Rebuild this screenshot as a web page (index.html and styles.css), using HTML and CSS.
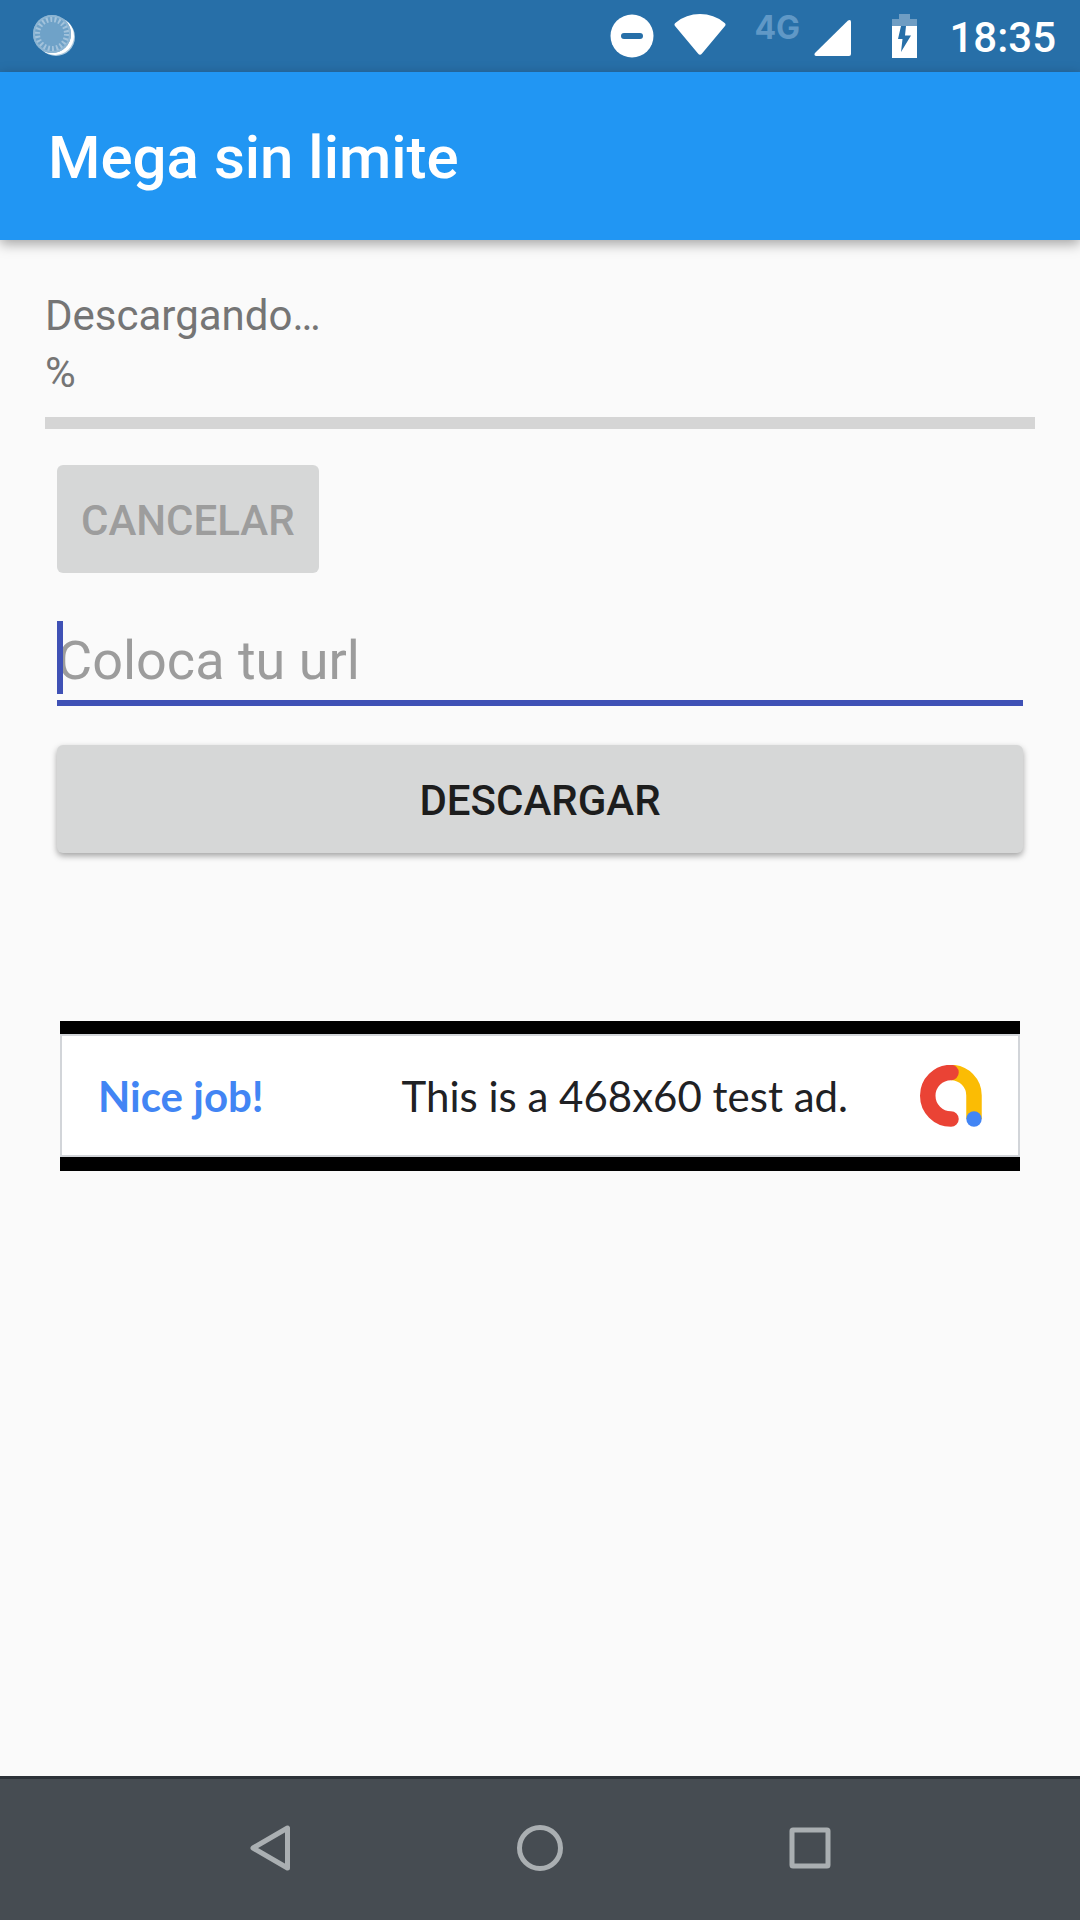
FILE: index.html
```html
<!DOCTYPE html>
<html lang="es">
<head>
<meta charset="utf-8">
<meta name="viewport" content="width=device-width, initial-scale=1">
<title>Mega sin limite</title>
<link rel="stylesheet" href="styles.css">
</head>
<body>
<div class="status-bar">
  <svg class="sync" width="48" height="48" viewBox="0 0 48 48" aria-hidden="true">
    <circle cx="25" cy="25" r="19" fill="#a9c8de"/>
    <circle cx="24" cy="24" r="19" fill="#fff"/>
    <circle cx="21" cy="22" r="19" fill="#6fa2c8"/>
    <circle cx="21" cy="22" r="15" fill="none" stroke="#a3c3dc" stroke-width="6" stroke-dasharray="2 2.280"/>
    <circle cx="21" cy="22" r="18" fill="none" stroke="#8db5d3" stroke-width="2"/>
  </svg>
  <div class="status-icons">
    <svg width="44" height="44" viewBox="0 0 44 44" aria-hidden="true">
      <circle cx="22" cy="22" r="21.500" fill="#fff"/>
      <rect x="11" y="19" width="22" height="6" rx="3" fill="#276fa8"/>
    </svg>
    <svg class="wifi" width="52" height="44" viewBox="0 0 52 44" aria-hidden="true">
      <path d="M2 8.500Q12 0 26 0T50 8.500Q52.500 10 51 12L28 39.500Q26 42 24 39.500L1 12Q-.5 10 2 8.500Z" fill="#fff"/>
    </svg>
    <span class="network">4G</span>
    <svg class="signal" width="38" height="38" viewBox="0 0 38 38" aria-hidden="true">
      <path d="M2 38Q-.5 37.500 1 35L34 2.500Q37 1 37 4V36Q37 38 35 38Z" fill="#fff"/>
    </svg>
    <svg class="battery" width="26" height="44" viewBox="0 0 26 44" aria-hidden="true">
      <path d="M7 0H18V5H25V12H0V5H7Z" fill="#6f9dc3"/>
      <path d="M0 12H25V44H0Z" fill="#fff"/>
      <path d="M9 12H14L13 21.500H19L9 38L10.500 25H6Z" fill="#276fa8"/>
    </svg>
    <time class="clock">18:35</time>
  </div>
</div>

<header class="app-bar">
  <h1 class="app-title">Mega sin limite</h1>
</header>

<main class="content">
  <p class="label" id="progress-label">Descargando…</p>
  <p class="label">%</p>
  <progress class="progress" value="0" max="100" aria-labelledby="progress-label"></progress>
  <form class="form">
    <button class="button cancel" type="button" disabled>CANCELAR</button>
    <div class="field">
      <input class="url" type="text" placeholder="Coloca tu url" aria-label="Coloca tu url">
      <span class="caret"></span>
    </div>
    <button class="button download" type="button">DESCARGAR</button>
  </form>
  <a class="ad" href="#">
    <span class="ad-body">
      <span class="ad-title">Nice job!</span>
      <span class="ad-text">This is a 468x60 test ad.</span>
      <svg width="62" height="62" viewBox="0 0 62 62" aria-hidden="true">
        <path d="M31 7.500A23 23 0 0 1 54 31V54" fill="none" stroke="#fbbc04" stroke-width="15.500"/>
        <path d="M31 7.500A23 23 0 0 0 31 54" fill="none" stroke="#ea4335" stroke-width="15.500" stroke-linecap="round"/>
        <circle cx="54" cy="54" r="7.700" fill="#4285f4"/>
      </svg>
    </span>
  </a>
</main>

<nav class="nav-bar">
  <button class="nav-button" type="button" aria-label="Atrás">
    <svg width="48" height="48" viewBox="0 0 48 48"><path d="M7 24L41.500 4V44Z"/></svg>
  </button>
  <button class="nav-button" type="button" aria-label="Inicio">
    <svg width="48" height="48" viewBox="0 0 48 48"><circle cx="24" cy="24" r="20.500"/></svg>
  </button>
  <button class="nav-button" type="button" aria-label="Recientes">
    <svg width="48" height="48" viewBox="0 0 48 48"><rect x="6" y="6" width="36" height="36" rx="1"/></svg>
  </button>
</nav>
</body>
</html>
```
FILE: styles.css
```css
* {
  box-sizing: border-box;
}

body {
  margin: 0;
  min-height: 100vh;
  display: flex;
  flex-direction: column;
  background: #fafafa;
  font-family: Roboto, sans-serif;
}

svg {
  display: block;
  flex: none;
}

.status-bar {
  height: 72px;
  padding: 0 24px 0 31px;
  display: flex;
  align-items: center;
  justify-content: space-between;
  background: #276fa8;
}

.status-icons {
  display: flex;
  align-items: center;
  color: #fff;
}

.wifi {
  margin-left: 20px;
}

.network {
  width: 46px;
  margin: 0 14px 16px 28px;
  font: 700 32px/32px Inter, sans-serif;
  color: #6098c6;
}

.signal {
  margin-top: 2px;
}

.battery {
  margin-left: 40px;
}

.clock {
  margin-left: 31px;
  padding-top: 4px;
  font-size: 42px;
  font-weight: 500;
  line-height: 48px;
}

.app-bar {
  height: 168px;
  padding: 4px 48px 0;
  display: flex;
  align-items: center;
  background: #2196f3;
  box-shadow: 0 4px 12px rgba(0, 0, 0, 0.35);
}

.app-title {
  margin: 0;
  font-size: 60px;
  font-weight: 500;
  line-height: 72px;
  color: #fff;
}

.content {
  flex: 1;
  padding: 47px 45px;
}

.label {
  margin: 0;
  font-size: 42px;
  line-height: 57px;
  color: #757575;
}

.progress {
  display: block;
  width: 100%;
  height: 12px;
  margin-top: 16px;
  border: 0;
  appearance: none;
  background: #d5d5d5;
}

.progress::-webkit-progress-bar {
  background: #d5d5d5;
}

.progress::-webkit-progress-value {
  background: #3f51b5;
}

.form {
  padding: 36px 12px 0;
  display: flex;
  flex-direction: column;
  align-items: stretch;
}

.button {
  height: 108px;
  padding: 4px 24px 0;
  border: 0;
  border-radius: 6px;
  background: #d6d7d7;
  color: #1d1d1d;
  font: 500 42px/48px Roboto, sans-serif;
}

.cancel {
  align-self: flex-start;
  color: #9d9d9d;
}

.field {
  position: relative;
  margin: 48px 0 39px;
}

.url {
  display: block;
  width: 100%;
  height: 85px;
  padding: 0;
  border: 0;
  border-bottom: 6px solid #3f51b5;
  outline: 0;
  background: transparent;
  font: 400 54px/72px Roboto, sans-serif;
  color: #1d1d1d;
}

.url::placeholder {
  color: #9c9c9c;
  opacity: 1;
}

.caret {
  position: absolute;
  left: 0;
  top: 0;
  width: 6px;
  height: 73px;
  background: #3f51b5;
}

.download {
  box-shadow: 0 3px 6px rgba(0, 0, 0, 0.35);
}

.ad {
  display: block;
  margin: 168px 15px 0;
  padding: 13px 0 14px;
  background: #000;
  text-decoration: none;
}

.ad-body {
  height: 123px;
  padding: 0 36px;
  display: flex;
  align-items: center;
  border: 2px solid #d2d5d9;
  background: #fff;
  font-family: Lato, sans-serif;
  font-size: 42px;
  line-height: 48px;
  color: #202124;
}

.ad-title {
  font-weight: 700;
  color: #4285f4;
}

.ad-text {
  margin: 0 72px 0 auto;
}

.nav-bar {
  height: 144px;
  padding: 0 12.5% 3px;
  display: grid;
  grid-template-columns: repeat(3, 1fr);
  border-top: 3px solid #2c3238;
  background: #464c52;
}

.nav-button {
  display: flex;
  align-items: center;
  justify-content: center;
  padding: 0;
  border: 0;
  background: transparent;
}

.nav-button svg {
  fill: none;
  stroke: #aaafb2;
  stroke-width: 5px;
  stroke-linejoin: round;
}
```
